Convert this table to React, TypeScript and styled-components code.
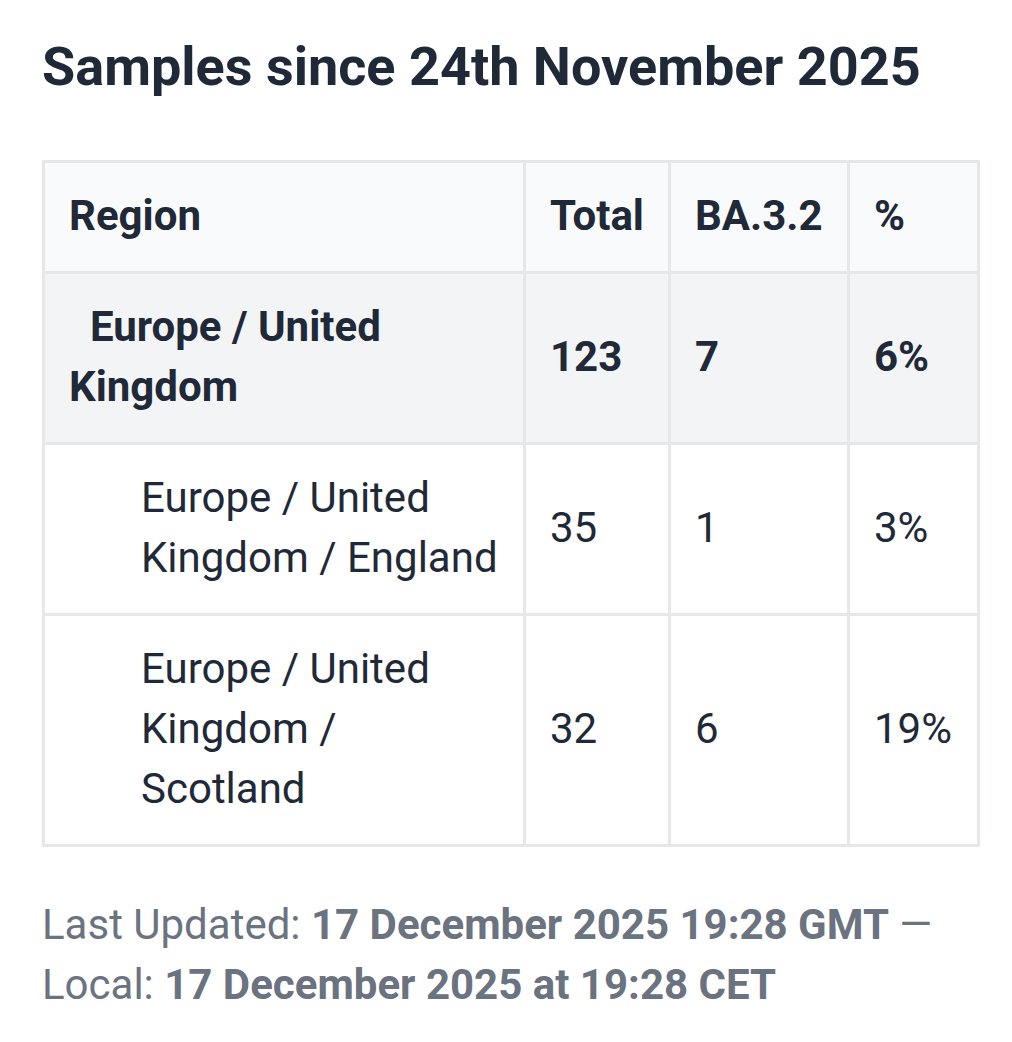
import React from "react";
import styled, { createGlobalStyle } from "styled-components";

const GlobalStyle = createGlobalStyle`
  html, body {
    margin: 0;
    padding: 0;
    background: #ffffff;
  }
  body {
    font-family: Roboto, "Liberation Sans", sans-serif;
    color: #1f2937;
  }
`;

const Page = styled.div`
  padding: 25px 35px 40px 42px;
`;

const Title = styled.h2`
  margin: 0 0 51px 0;
  font-size: 54px;
  line-height: 84px;
  font-weight: 700;
  color: #1f2937;
`;

const Table = styled.table`
  width: 935px;
  border-collapse: collapse;
  border: 3px solid #e5e7eb;
  font-size: 42px;
  line-height: 60px;
  table-layout: fixed;
`;

const Col = styled.col<{ w: number }>`
  width: ${({ w }) => w}px;
`;

const HeadRow = styled.tr`
  background: #f9fafb;
`;

const Row = styled.tr<{ summary?: boolean }>`
  background: ${({ summary }) => (summary ? "#f3f4f6" : "#ffffff")};
  font-weight: ${({ summary }) => (summary ? 700 : 400)};
`;

const Th = styled.th`
  border: 3px solid #e5e7eb;
  padding: 23px 24px 25px;
  text-align: left;
  font-weight: 700;
  vertical-align: middle;
`;

const Td = styled.td<{ indent?: boolean }>`
  border: 3px solid #e5e7eb;
  padding: 23px 24px 25px ${({ indent }) => (indent ? "96px" : "24px")};
  text-align: left;
  vertical-align: middle;
  white-space: pre-wrap;
`;

const Footer = styled.p`
  margin: 48px 0 0 0;
  font-size: 42px;
  line-height: 60px;
  color: #6b7280;
`;

const Strong = styled.strong`
  font-weight: 700;
`;

type Region = {
  name: string;
  total: number;
  hits: number;
  pct: string;
  summary?: boolean;
};

const rows: Region[] = [
  { name: "  Europe / United Kingdom", total: 123, hits: 7, pct: "6%", summary: true },
  { name: "Europe / United Kingdom / England", total: 35, hits: 1, pct: "3%" },
  { name: "Europe / United Kingdom / Scotland", total: 32, hits: 6, pct: "19%" },
];

export default function App() {
  return (
    <Page>
      <GlobalStyle />
      <Title>Samples since 24th November 2025</Title>
      <Table>
        <colgroup>
          <Col w={481} />
          <Col w={145} />
          <Col w={179} />
          <Col w={130} />
        </colgroup>
        <thead>
          <HeadRow>
            <Th>Region</Th>
            <Th>Total</Th>
            <Th>BA.3.2</Th>
            <Th>%</Th>
          </HeadRow>
        </thead>
        <tbody>
          {rows.map((r) => (
            <Row key={r.name} summary={r.summary}>
              <Td indent={!r.summary}>{r.name}</Td>
              <Td>{r.total}</Td>
              <Td>{r.hits}</Td>
              <Td>{r.pct}</Td>
            </Row>
          ))}
        </tbody>
      </Table>
      <Footer>
        Last Updated: <Strong>17 December 2025 19:28 GMT</Strong> — Local:{" "}
        <Strong>17 December 2025 at 19:28 CET</Strong>
      </Footer>
    </Page>
  );
}
